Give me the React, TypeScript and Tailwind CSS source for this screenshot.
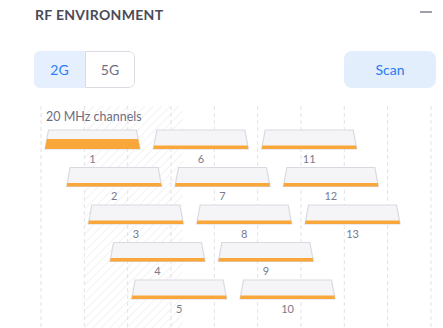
import React from "react";

const CHANNELS = Array.from({ length: 13 }, (_, i) => ({
  n: i + 1,
  x: 45 + i * 21.67,
  row: i % 5,
  load: i === 0 ? 10 : 3.5,
}));

const GRID = Array.from({ length: 10 }, (_, i) => 41 + i * 43.33);

const W = 95;
const H = 19;
const INSET = 3.5;

function Trapezoid({ x, y, load }: { x: number; y: number; load: number }) {
  const oi = (INSET * load) / H;
  const top = `${x + INSET},${y} ${x + W - INSET},${y} ${x + W},${y + H} ${x},${y + H}`;
  const bar = `${x + oi},${y + H - load} ${x + W - oi},${y + H - load} ${x + W},${y + H} ${x},${y + H}`;
  return (
    <g>
      <polygon points={top} fill="#f5f5f7" stroke="#d9d9e1" strokeWidth="1.2" />
      <polygon points={bar} fill="#f9a63a" />
    </g>
  );
}

function ChannelChart() {
  return (
    <div className="relative h-[222px] w-full">
      <svg className="absolute inset-0" width="443" height="222">
        <defs>
          <pattern id="hatch" width="6" height="6" patternUnits="userSpaceOnUse" patternTransform="rotate(45)">
            <line x1="0" y1="0" x2="0" y2="6" stroke="#e6e6ea" strokeWidth="1" />
          </pattern>
        </defs>
        <rect x="85" y="0" width="98" height="222" fill="url(#hatch)" />
        {GRID.map((gx) => (
          <line key={gx} x1={gx} y1="0" x2={gx} y2="222" stroke="#e2e2e8" strokeWidth="1" strokeDasharray="4 3" />
        ))}
        {CHANNELS.map((c) => (
          <Trapezoid key={c.n} x={c.x} y={24 + c.row * 37.5} load={c.load} />
        ))}
      </svg>
      <span className="absolute left-[46px] top-[3px] text-[12.5px] leading-[16px] text-[#6e6e80]">20 MHz channels</span>
      {CHANNELS.map((c) => (
        <span
          key={c.n}
          className="absolute w-[95px] text-center text-[11px] leading-[14px] text-[#7a7a8c]"
          style={{ left: c.x, top: 45.5 + c.row * 37.5 }}
        >
          {c.n}
        </span>
      ))}
    </div>
  );
}

export default function App() {
  return (
    <div className="h-[328px] w-[443px] overflow-hidden bg-white font-['Lato',sans-serif]">
      <div className="flex h-[28px] items-center justify-between pl-[35px] pr-[11px]">
        <h2 className="text-[14px] font-bold tracking-[0.3px] text-[#4b4b57]">RF ENVIRONMENT</h2>
        <span className="mb-[4px] block h-[1.5px] w-[12px] bg-[#a0a0ac]" />
      </div>

      <div className="mt-[23px] flex items-center justify-between pl-[34px] pr-[7px]">
        <div className="flex h-[37px] overflow-hidden rounded-[6px]">
          <button className="w-[51px] bg-[#e5effd] text-[14px] text-[#2f7cf6]">2G</button>
          <button className="w-[50px] rounded-r-[6px] border border-[#dadbe3] text-[14px] text-[#6e6e80]">5G</button>
        </div>
        <button className="h-[37px] w-[92px] rounded-[8px] bg-[#e3eefd] text-[14px] text-[#2b78f0]">Scan</button>
      </div>

      <div className="mt-[18px]">
        <ChannelChart />
      </div>
    </div>
  );
}
